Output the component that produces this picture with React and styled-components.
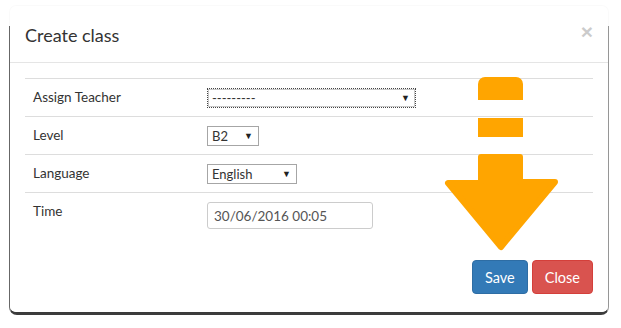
import React from 'react';
import styled, { createGlobalStyle } from 'styled-components';

const GlobalStyle = createGlobalStyle`
  body {
    margin: 0;
    background: #fff;
    font-family: Lato, "Open Sans", sans-serif;
    color: #333;
  }
`;

const rows = [
  { label: 'Assign Teacher', kind: 'select', value: '---------', width: 209, focused: true },
  { label: 'Level', kind: 'select', value: 'B2', width: 52 },
  { label: 'Language', kind: 'select', value: 'English', width: 90 },
  { label: 'Time', kind: 'input', value: '30/06/2016 00:05', width: 166 },
];

const App = () => {
  return (
    <Page>
      <GlobalStyle />
      <Modal>
        <Header>
          <Title>Create class</Title>
          <CloseX type="button">×</CloseX>
        </Header>
        <Body>
          <Table>
            <tbody>
              {rows.map((row, idx) => (
                <Row key={idx} last={idx === rows.length - 1}>
                  <Label>{row.label}</Label>
                  <Field>
                    {row.kind === 'select' ? (
                      <SelectWrap style={{ width: row.width }}>
                        <Select $focused={row.focused} defaultValue={row.value}>
                          <option>{row.value}</option>
                        </Select>
                      </SelectWrap>
                    ) : (
                      <TextInput style={{ width: row.width }} defaultValue={row.value} />
                    )}
                  </Field>
                </Row>
              ))}
            </tbody>
          </Table>
        </Body>
        <Footer>
          <Button $variant="primary">Save</Button>
          <Button $variant="danger">Close</Button>
        </Footer>
      </Modal>
      <Arrow width="125" height="185" viewBox="0 0 125 185">
        <path d="M38 28 V12 a7 7 0 0 1 7 -7 H76 a7 7 0 0 1 7 7 V28 Z" fill="#ffa500" />
        <rect x="38" y="46" width="45" height="19" fill="#ffa500" />
        <path
          d="M41 85 H80 V110 H115 L61 175 L8 111 H41 Z"
          fill="#ffa500"
          stroke="#ffa500"
          strokeWidth="6"
          strokeLinejoin="round"
        />
      </Arrow>
    </Page>
  );
};

export default App;

const Page = styled.div`
  position: relative;
  width: 621px;
  height: 328px;
  padding: 6px 0 0 10px;
  box-sizing: border-box;
`;

const Modal = styled.div`
  position: relative;
  width: 598px;
  height: 306px;
  background: #fff;
  border-radius: 6px;
  box-shadow: 0 0 0 1px rgba(0, 0, 0, 0.02);
  display: flex;
  flex-direction: column;

  &::before {
    content: '';
    position: absolute;
    top: 20px;
    left: -1px;
    right: -1px;
    bottom: -3px;
    border-left: 1px solid #6a6a6a;
    border-right: 1px solid #9a9a9a;
    border-bottom: 3px solid #3c3c3c;
    border-radius: 0 0 8px 8px;
    z-index: -1;
  }
`;

const Header = styled.div`
  display: flex;
  justify-content: space-between;
  align-items: center;
  height: 56px;
  padding: 0 15px;
  border-bottom: 1px solid #e5e5e5;
`;

const Title = styled.h4`
  margin: 2px 0 0;
  font-size: 18px;
  font-weight: 400;
  color: #333;
`;

const CloseX = styled.button`
  border: none;
  background: none;
  padding: 0;
  margin: -6px 0 0;
  font-family: "Liberation Sans", sans-serif;
  font-size: 21px;
  font-weight: 700;
  line-height: 1;
  color: #000;
  opacity: 0.2;
`;

const Body = styled.div`
  padding: 15px 15px 0;
`;

const Table = styled.table`
  width: 100%;
  border-collapse: collapse;
  font-size: 13.5px;
`;

const Row = styled.tr`
  border-top: 1px solid #ddd;
  border-bottom: ${props => (props.last ? 'none' : '1px solid #ddd')};
`;

const Label = styled.td`
  width: 166px;
  padding: 8px 8px;
  line-height: 20px;
  vertical-align: top;
  color: #333;
`;

const Field = styled.td`
  padding: 8px 0 8px 0;
  vertical-align: top;
`;

const SelectWrap = styled.div`
  position: relative;
  margin-top: 1px;

  &::after {
    content: '▼';
    position: absolute;
    right: 6px;
    top: 4px;
    font-size: 9px;
    color: #222;
    pointer-events: none;
  }
`;

const Select = styled.select`
  appearance: none;
  width: 100%;
  height: 20px;
  padding: 0 0 0 4px;
  margin: 0;
  background: #fff;
  border: ${props => (props.$focused ? '1px dotted #444' : '1px solid #a6a6a6')};
  outline: ${props => (props.$focused ? '1px solid #c8c8c8' : 'none')};
  outline-offset: -2px;
  border-radius: 0;
  font-family: Lato, "Open Sans", sans-serif;
  font-size: 13px;
  color: #333;
`;

const TextInput = styled.input`
  box-sizing: border-box;
  height: 27px;
  margin-top: 1px;
  padding: 0 6px;
  border: 1px solid #ccc;
  border-radius: 3px;
  font-family: Lato, "Open Sans", sans-serif;
  font-size: 13.5px;
  color: #555;
`;

const Footer = styled.div`
  display: flex;
  justify-content: flex-end;
  gap: 4px;
  padding: 23px 15px 0;
`;

const Button = styled.button`
  height: 34px;
  padding: 0 12px;
  border-radius: 4px;
  font-family: Lato, "Open Sans", sans-serif;
  font-size: 14.5px;
  color: #fff;
  background: ${props => (props.$variant === 'primary' ? '#337ab7' : '#d9534f')};
  border: 1px solid ${props => (props.$variant === 'primary' ? '#2e6da4' : '#d43f3a')};
`;

const Arrow = styled.svg`
  position: absolute;
  left: 440px;
  top: 72px;
`;
